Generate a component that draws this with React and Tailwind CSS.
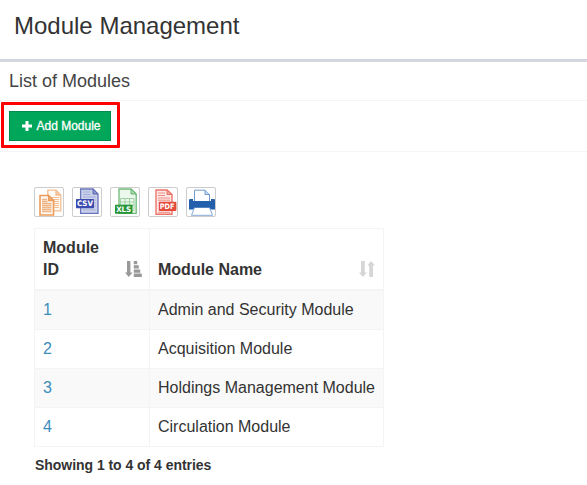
const modules = [
  { id: 1, name: 'Admin and Security Module' },
  { id: 2, name: 'Acquisition Module' },
  { id: 3, name: 'Holdings Management Module' },
  { id: 4, name: 'Circulation Module' },
];

function CopyIcon() {
  return (
    <svg width="28" height="28" viewBox="0 0 28 28" fill="#fff9f3" stroke="#f3bd92" strokeWidth="1.3">
      <path d="M12.8 2.2H21L25.8 7V22.8H12.8Z" />
      <path d="M21 2.2V7H25.8" fill="#f6c79f" />
      <path d="M15 9.5H24M15 11.5H24M15 13.5H24M15 15.5H24M15 17.5H24M15 19.5H24" strokeWidth="1" />
      <path d="M5 7.5H13.5L18.5 12.5V27H5Z" stroke="#ec9c5a" strokeWidth="1.6" />
      <path d="M13.5 7.5V12.5H18.5Z" fill="#f0b07c" stroke="#ec9c5a" />
      <path d="M7 11.5H12M7 13.5H12.5M7 15.5H16.5M7 17.5H16.5M7 19.5H16.5M7 21.5H16.5M7 23.5H16.5" stroke="#f0b584" />
    </svg>
  );
}

function CsvIcon() {
  return (
    <svg width="28" height="28" viewBox="0 0 28 28">
      <path d="M7.6 1H20L25 6V25.4H7.6Z" fill="#cbd1ea" stroke="#6975bd" strokeWidth="1.3" />
      <path d="M20 1V6H25Z" fill="#8c98d0" stroke="#5966b4" />
      <path d="M10 4H17.5M10 6.5H17.5M10 9H23" stroke="#a3add9" />
      <path d="M10 22H23M21 12H23M21 15H23M21 18H23" stroke="#a9b3db" />
      <rect x="3" y="11" width="18" height="9.2" rx=".5" fill="#3d4caf" />
      <text x="12" y="18.4" textAnchor="middle" textLength="16" lengthAdjust="spacingAndGlyphs" fontSize="7.6" fontWeight="700" fontFamily="'DejaVu Sans', sans-serif" fill="white">CSV</text>
    </svg>
  );
}

function XlsIcon() {
  return (
    <svg width="28" height="28" viewBox="0 0 28 28">
      <path d="M8 1H20L25.2 6V25.4H8Z" fill="#edf8ed" stroke="#70ba79" strokeWidth="1.3" />
      <path d="M20 1V6H25.2Z" fill="#a9dab0" stroke="#62b46e" />
      <path d="M9.5 10.5H23V22.5H9.5ZM9.5 14H23M9.5 17H23M14 10.5V22.5M18.5 10.5V22.5" fill="none" stroke="#9fd2a5" />
      <rect x="4" y="16.8" width="17.5" height="9" rx=".5" fill="#279539" />
      <text x="12.7" y="24.1" textAnchor="middle" textLength="15" lengthAdjust="spacingAndGlyphs" fontSize="7.6" fontWeight="700" fontFamily="'DejaVu Sans', sans-serif" fill="white">XLS</text>
    </svg>
  );
}

function PdfIcon() {
  return (
    <svg width="28" height="28" viewBox="0 0 28 28">
      <path d="M7 2H18L23 6.5V26.2H7Z" fill="#fde8e5" stroke="#ea766b" strokeWidth="1.4" />
      <path d="M18 2V6.5H23Z" fill="#f2a69f" stroke="#e86e63" />
      <path d="M9 5H16M9 7.5H16M9 10H21M9 12.2H21M9 24.3H21" stroke="#ee8f86" />
      <rect x="9.8" y="13.8" width="17.6" height="9.2" rx="1" fill="#e5493b" />
      <text x="18.2" y="21.1" textAnchor="middle" textLength="14.8" lengthAdjust="spacingAndGlyphs" fontSize="7.4" fontWeight="700" fontFamily="'DejaVu Sans', sans-serif" fill="white">PDF</text>
    </svg>
  );
}

function PrintIcon() {
  return (
    <svg width="28" height="28" viewBox="0 0 28 28">
      <path d="M7.5 13V2.2H18L22.5 6.5V13" fill="#fff" stroke="#6f9bce" />
      <path d="M18 2.2V6.5H22.5" fill="#c4d8ee" stroke="#6f9bce" />
      <path d="M3 11H6V13H24V11H27Q28 11 28 12V21.5H2V12Q2 11 3 11Z" fill="#235fab" />
      <path d="M7.5 19.5H22.5L25.5 27.3H4.5Z" fill="#fff" stroke="#86aad5" />
      <path d="M7 19H23" stroke="#235fab" />
    </svg>
  );
}

function SortedIcon() {
  return (
    <svg className="mb-1 shrink-0" width="17" height="16" viewBox="0 0 17 16" fill="#999">
      <path d="M2 0H5.4V11.5H7.6L3.7 16L0 11.5H2ZM8.8 0H12.2V3.3H8.8ZM8.8 4.2H13.8V7.5H8.8ZM8.8 8.4H15.2V11.7H8.8ZM8.8 12.6H16.8V16H8.8Z" />
    </svg>
  );
}

function UnsortedIcon() {
  return (
    <svg className="mb-1 shrink-0" width="16" height="16" viewBox="0 0 16 16" fill="#d6d6d6">
      <path d="M2 0H5.8V11.5H7.8L3.9 16L0 11.5H2ZM10.2 16H14V4.5H16L12.1 0L8.2 4.5H10.2Z" />
    </svg>
  );
}

const exportsList = [
  ['Copy', CopyIcon],
  ['CSV', CsvIcon],
  ['Excel', XlsIcon],
  ['PDF', PdfIcon],
  ['Print', PrintIcon],
];

export default function App() {
  return (
    <main className="h-[485px] w-[587px] overflow-hidden bg-white font-['Liberation_Sans',Arial,sans-serif] text-[#333]">
      <header className="h-[62px] border-b-[3px] border-[#d2d6de] pt-3 pl-3.5">
        <h1 className="text-2xl leading-[28px]">Module Management</h1>
      </header>
      <h2 className="h-[38px] pt-2 pl-[9px] text-lg leading-[22px] text-[#444]">List of Modules</h2>
      <section className="h-[52px] border-y border-[#f4f4f4] pt-px pl-px">
        <div className="h-[46px] w-[119px] rounded-[1px] border-[3px] border-[#fe0000] pt-1.5 pl-[5px]">
          <button className="flex h-[30px] w-[102px] items-center border border-[#008d4c] bg-[#00a65a] pl-3 text-xs text-white">
            <svg width="10" height="10" viewBox="0 0 10 10" fill="white">
              <path d="M3.5 0H6.5V3.5H10V6.5H6.5V10H3.5V6.5H0V3.5H3.5Z" />
            </svg>
            <span className="ml-[4.5px] whitespace-nowrap [-webkit-text-stroke:0.3px_white]">Add Module</span>
          </button>
        </div>
      </section>
      <section className="pt-[35px] pl-[34px]">
        <div className="flex gap-2">
          {exportsList.map(([label, Icon]) => (
            <button key={label} aria-label={label} className="size-[30px] rounded-[2px] border border-[#ccc] bg-white">
              <Icon />
            </button>
          ))}
        </div>
        <table className="mt-[11px] w-[350px] table-fixed border-separate border-spacing-0 border-t border-l border-[#f4f4f4] text-base leading-[22px]">
          <colgroup>
            <col className="w-[115px]" />
            <col />
          </colgroup>
          <thead>
            <tr className="h-[62px] text-left align-bottom">
              <th className="border-r border-b-2 border-[#f4f4f4] pr-[7px] pb-2 pl-2">
                <div className="flex items-end justify-between">
                  <span className="w-16">Module ID</span>
                  <SortedIcon />
                </div>
              </th>
              <th className="border-r border-b-2 border-[#f4f4f4] pr-2 pb-2 pl-2">
                <div className="flex items-end justify-between">
                  <span>Module Name</span>
                  <UnsortedIcon />
                </div>
              </th>
            </tr>
          </thead>
          <tbody>
            {modules.map(({ id, name }) => (
              <tr key={id} className="h-[39px] odd:bg-[#f9f9f9]">
                <td className="border-r border-b border-[#f4f4f4] px-2 text-[#3c8dbc]">{id}</td>
                <td className="border-r border-b border-[#f4f4f4] px-2 whitespace-nowrap">{name}</td>
              </tr>
            ))}
          </tbody>
        </table>
        <p className="mt-2 pl-px text-sm leading-5 font-bold tracking-[-0.04px]">Showing 1 to 4 of 4 entries</p>
      </section>
    </main>
  );
}
